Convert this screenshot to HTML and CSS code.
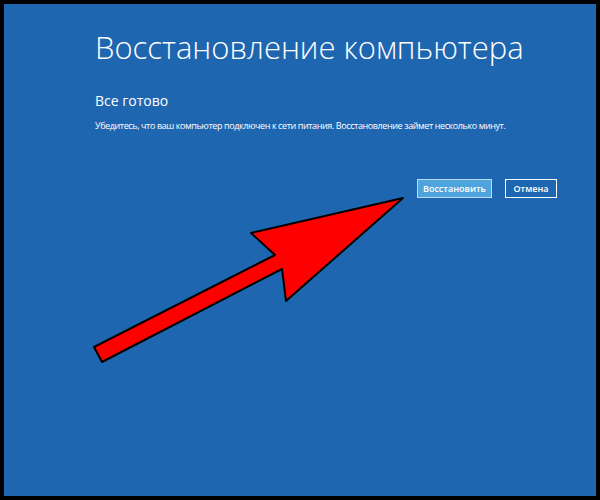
FILE: index.html
```html
<!DOCTYPE html>
<html lang="ru">
<head>
    <meta charset="UTF-8">
    <meta name="viewport" content="width=device-width, initial-scale=1.0">
    <title>Восстановление компьютера</title>
    <link rel="stylesheet" href="styles.css">
</head>
<body>

    <div class="screen">
        <div class="recovery">
            <h1 class="recovery-title">Восстановление компьютера</h1>
            <h2 class="recovery-subtitle">Все готово</h2>
            <p class="recovery-text">Убедитесь, что ваш компьютер подключен к сети питания. Восстановление займет несколько минут.</p>

            <div class="recovery-actions">
                <button type="button" class="btn btn-primary">Восстановить</button>
                <button type="button" class="btn btn-cancel">Отмена</button>
            </div>
        </div>

        <!-- pointer to the restore button -->
        <svg class="pointer" width="592" height="492" viewBox="0 0 592 492">
            <polygon points="399,194 247,229 271,251 90,343 98,358 278,265 282,297"
                     fill="#ff0000" stroke="#000" stroke-width="2" stroke-linejoin="round"/>
        </svg>
    </div>

</body>
</html>
```

FILE: styles.css
```css
* {
    margin: 0;
    padding: 0;
    box-sizing: border-box;
}

body {
    background: #000;
    padding: 4px;
    font-family: 'Open Sans', 'Noto Sans', sans-serif;
}

.screen {
    position: relative;
    height: 492px;
    background: #1f66b1;
    color: #fff;
}

.recovery {
    padding: 23px 39px 0 91px;
}

.recovery-title {
    font-size: 31px;
    font-weight: 300;
    line-height: 40px;
}

.recovery-subtitle {
    margin-top: 24px;
    font-size: 14px;
    font-weight: 400;
    line-height: 20px;
}

.recovery-text {
    margin-top: 8px;
    font-size: 9px;
    line-height: 14px;
    letter-spacing: -0.4px;
}

.recovery-actions {
    display: flex;
    justify-content: flex-end;
    gap: 13px;
    margin-top: 46px;
}

.btn {
    height: 19px;
    padding: 0;
    border: 1px solid #fff;
    background: transparent;
    color: #fff;
    font-family: inherit;
    font-size: 9px;
    font-weight: 600;
    cursor: pointer;
}

.btn-primary {
    width: 75px;
    background: #4fa4dd;
    border-color: #b9dcf3;
}

.btn-cancel {
    width: 52px;
}

.pointer {
    position: absolute;
    top: 0;
    left: 0;
}
```
